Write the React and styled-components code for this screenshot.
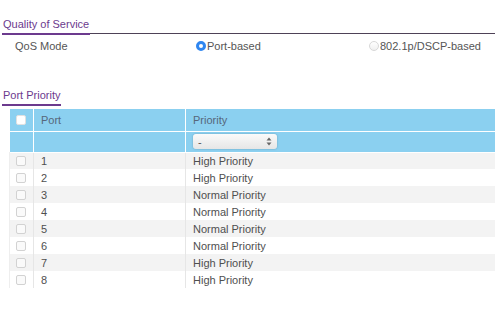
import React from "react";
import styled, { createGlobalStyle } from "styled-components";

const GlobalStyle = createGlobalStyle`
  body {
    margin: 0;
    background: #fff;
    font-family: "Liberation Sans", Arial, sans-serif;
    font-size: 11px;
    color: #555;
  }
`;

const ports = [
  { id: 1, priority: "High Priority" },
  { id: 2, priority: "High Priority" },
  { id: 3, priority: "Normal Priority" },
  { id: 4, priority: "Normal Priority" },
  { id: 5, priority: "Normal Priority" },
  { id: 6, priority: "Normal Priority" },
  { id: 7, priority: "High Priority" },
  { id: 8, priority: "High Priority" },
];

const App = () => {
  return (
    <Page>
      <GlobalStyle />
      <SectionHead>
        <SectionTitle>Quality of Service</SectionTitle>
        <Rule />
      </SectionHead>
      <ModeRow>
        <span>QoS Mode</span>
        <RadioLabel>
          <Radio $checked />
          Port-based
        </RadioLabel>
        <RadioLabel>
          <Radio />
          802.1p/DSCP-based
        </RadioLabel>
      </ModeRow>

      <SectionHead>
        <SectionTitle>Port Priority</SectionTitle>
      </SectionHead>
      <Table>
        <colgroup>
          <col style={{ width: 24 }} />
          <col style={{ width: 152 }} />
          <col />
        </colgroup>
        <thead>
          <HeadRow>
            <CheckCell>
              <Check $head />
            </CheckCell>
            <HeadCell>Port</HeadCell>
            <HeadCell>Priority</HeadCell>
          </HeadRow>
          <HeadRow $filter>
            <CheckCell />
            <HeadCell />
            <HeadCell>
              <FakeSelect>
                <span>-</span>
                <svg width="6" height="9" viewBox="0 0 6 9">
                  <path d="M3 0.5 L5.5 3.5 H0.5 Z" fill="#666" />
                  <path d="M3 8.5 L5.5 5.5 H0.5 Z" fill="#666" />
                </svg>
              </FakeSelect>
            </HeadCell>
          </HeadRow>
        </thead>
        <tbody>
          {ports.map((p) => (
            <Row key={p.id} $odd={p.id % 2 === 1}>
              <CheckCell $body>
                <Check />
              </CheckCell>
              <Cell>{p.id}</Cell>
              <Cell>{p.priority}</Cell>
            </Row>
          ))}
        </tbody>
      </Table>
    </Page>
  );
};

const Page = styled.div`
  width: 495px;
  padding-top: 16px;
  overflow: hidden;
`;

const SectionHead = styled.div`
  display: flex;
  align-items: flex-end;
  margin-left: 2px;
  height: 19px;
`;

const SectionTitle = styled.div`
  color: #6c3a8e;
  font-size: 11px;
  line-height: 15px;
  padding: 0 1px 1px;
  border-bottom: 2px solid #6c3a8e;
  white-space: nowrap;
`;

const Rule = styled.div`
  flex: 1;
  height: 0;
  border-bottom: 1px solid #4e4257;
  margin-bottom: 1px;
`;

const ModeRow = styled.div`
  display: grid;
  grid-template-columns: 181px 173px 1fr;
  align-items: center;
  height: 22px;
  padding-left: 15px;
  margin-bottom: 30px;
  color: #555;
`;

const RadioLabel = styled.label`
  display: flex;
  align-items: center;
  gap: 1px;
`;

const Radio = styled.span`
  width: 10px;
  height: 10px;
  box-sizing: border-box;
  border-radius: 50%;
  border: ${(p) => (p.$checked ? "3px solid #2f86f0" : "1px solid #d8d8d8")};
  background: ${(p) => (p.$checked ? "#fff" : "linear-gradient(#fff, #f0f0f0)")};
`;

const Table = styled.table`
  margin: 3px 0 0 9px;
  width: 486px;
  border-collapse: collapse;
  table-layout: fixed;
  color: #555;
  font-size: 11px;
`;

const HeadRow = styled.tr`
  background: #8bd0f0;
  height: ${(p) => (p.$filter ? "21px" : "22px")};
  border-bottom: 1px solid #fff;
`;

const HeadCell = styled.th`
  text-align: left;
  font-weight: normal;
  color: #56677a;
  padding: 0 0 0 7px;
  border-left: 1px solid #fff;
`;

const CheckCell = styled.td`
  padding: 0 0 0 6px;
  border-left: ${(p) => (p.$body ? "1px solid #eee" : "none")};
`;

const Check = styled.span`
  display: block;
  width: 10px;
  height: 10px;
  box-sizing: border-box;
  border: 1px solid ${(p) => (p.$head ? "#e0e0e0" : "#d2d2d2")};
  border-radius: 2px;
  background: ${(p) => (p.$head ? "#fff" : "#fafafa")};
`;

const Row = styled.tr`
  height: 17px;
  background: ${(p) => (p.$odd ? "#f3f3f3" : "#fff")};
`;

const Cell = styled.td`
  padding: 0 0 0 7px;
  border-left: 1px solid #e6e6e6;
  color: #4f4f4f;
  white-space: nowrap;
  overflow: hidden;
`;

const FakeSelect = styled.div`
  display: flex;
  align-items: center;
  justify-content: space-between;
  width: 84px;
  height: 15px;
  box-sizing: border-box;
  padding: 0 5px;
  border-radius: 3px;
  background: linear-gradient(#fafafa, #e6e6e6);
  box-shadow: 0 0 2px rgba(0, 0, 0, 0.25);
  color: #555;
`;

export default App;
